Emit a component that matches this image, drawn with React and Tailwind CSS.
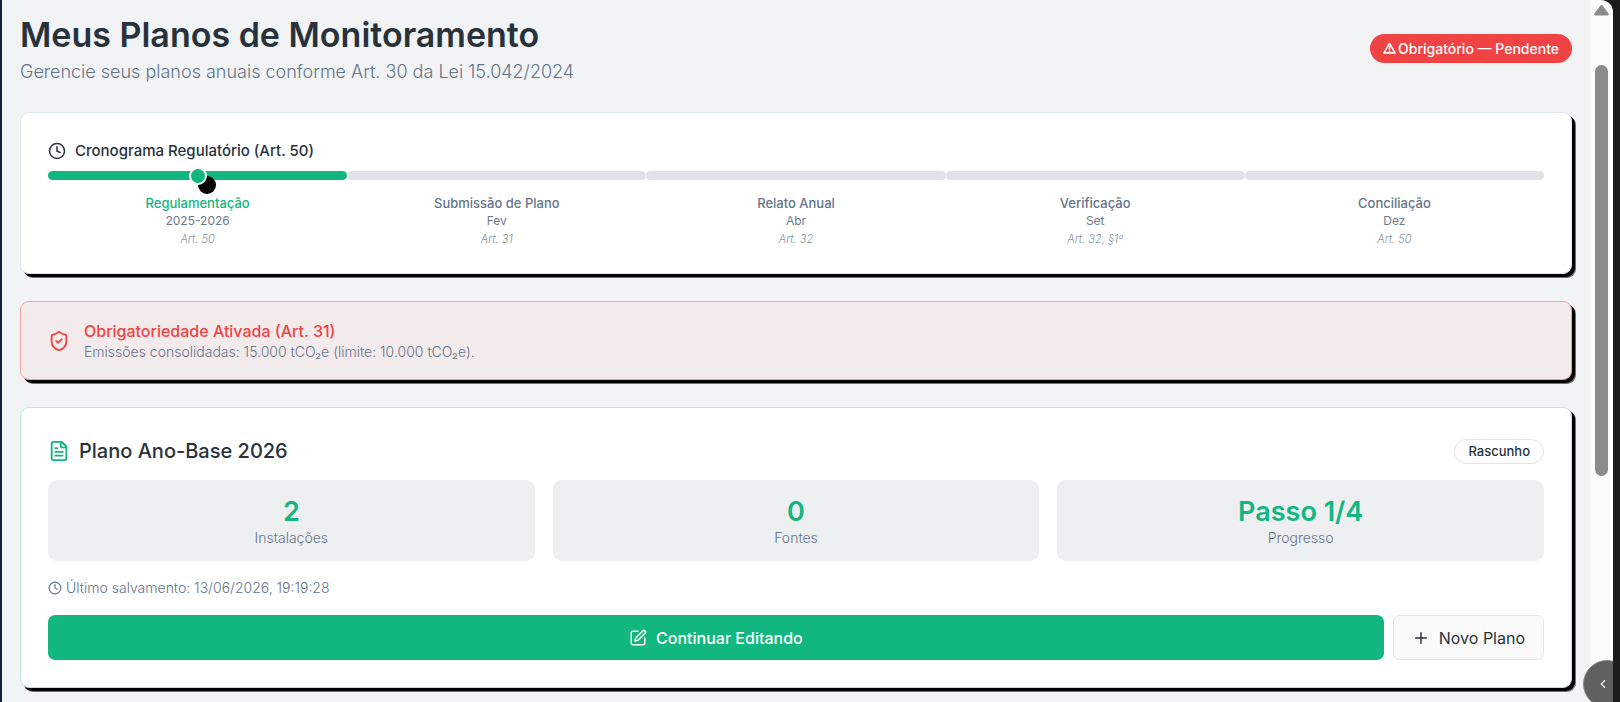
import clsx from "clsx";
import { ChevronLeft, Clock, FileText, Plus, ShieldCheck, SquarePen } from "lucide-react";

const STEPS = [
  { label: "Regulamentação", period: "2025-2026", article: "Art. 50", active: true },
  { label: "Submissão de Plano", period: "Fev", article: "Art. 31" },
  { label: "Relato Anual", period: "Abr", article: "Art. 32" },
  { label: "Verificação", period: "Set", article: "Art. 32, §1º" },
  { label: "Conciliação", period: "Dez", article: "Art. 50" },
];

const STATS = [
  { value: "2", label: "Instalações" },
  { value: "0", label: "Fontes" },
  { value: "Passo 1/4", label: "Progresso" },
];

function Card({ className, children }) {
  return (
    <section className={clsx("rounded-[9px] border shadow-[3px_3px_0_0_#000,4px_4px_0_0_#0008]", className)}>
      {children}
    </section>
  );
}

function WarningIcon() {
  return (
    <svg className="h-3 w-[13px]" viewBox="0 0 13 12" fill="none" stroke="currentColor" aria-hidden="true">
      <path d="M6.500 1.300L12 10.900H1Z" strokeWidth="1.600" strokeLinejoin="round" />
      <path d="M6.500 4V7.800M6.500 8.700V10.200" strokeWidth="1.500" />
    </svg>
  );
}

function Header() {
  return (
    <header className="flex items-center justify-between">
      <div>
        <h1 className="text-[34px] leading-[48px] font-semibold">Meus Planos de Monitoramento</h1>
        <p className="text-[18px] leading-[26px] font-light text-[#64748b]">
          Gerencie seus planos anuais conforme Art. 30 da Lei 15.042/2024
        </p>
      </div>
      <span className="flex items-center gap-0.5 rounded-full bg-[#f04444] px-[13px] text-[14px] leading-[29px] font-medium text-white">
        <WarningIcon />
        Obrigatório — Pendente
      </span>
    </header>
  );
}

function Timeline() {
  return (
    <Card className="border-[#dfe6ef] bg-white px-[27px] pt-[26px] pb-[25px]">
      <h2 className="flex items-center gap-[9px] text-[15px] leading-6 font-medium">
        <Clock className="size-[18px]" />
        Cronograma Regulatório (Art. 50)
      </h2>
      <ol className="mt-2 grid grid-cols-5">
        {STEPS.map((step) => (
          <li key={step.label} className="flex flex-col items-center">
            <div
              className={clsx(
                "relative h-[9px] w-full rounded-full",
                step.active ? "bg-[#12b780]" : "bg-[#dfe2e7]"
              )}
            >
              {step.active && (
                <span className="absolute top-1/2 left-1/2 size-[18px] -translate-1/2 rounded-full border-2 border-white bg-[#12b780] shadow-[9px_9px_0_0_#000]" />
              )}
            </div>
            <span
              className={clsx(
                "mt-3.5 text-[13px] leading-[18px] font-medium",
                step.active ? "text-[#12b780]" : "text-[#64748b]"
              )}
            >
              {step.label}
            </span>
            <span className="text-[12px] leading-[18px] text-[#6b7a8f]">{step.period}</span>
            <span className="text-[11px] leading-[18px] font-light text-[#8a94a1] italic">{step.article}</span>
          </li>
        ))}
      </ol>
    </Card>
  );
}

function ObligationAlert() {
  return (
    <Card className="flex items-center gap-3.5 border-[#f4a3a5] bg-[#f3eaeb] px-[27px] pt-[18px] pb-[17px]">
      <ShieldCheck className="size-[22px] text-[#f04444]" />
      <div>
        <h2 className="text-[16px] leading-[22px] font-medium text-[#f04444]">Obrigatoriedade Ativada (Art. 31)</h2>
        <p className="text-[14px] leading-5 font-light text-[#64748b]">
          Emissões consolidadas: 15.000 tCO₂e (limite: 10.000 tCO₂e).
        </p>
      </div>
    </Card>
  );
}

function PlanCard() {
  return (
    <Card className="border-[#b5e8d8] bg-white p-[27px]">
      <div className="flex items-center justify-between">
        <h2 className="flex items-center gap-[9px] text-[20px] leading-8 font-medium">
          <FileText className="size-[22px] text-[#12b780]" />
          Plano Ano-Base 2026
        </h2>
        <span className="rounded-full border border-[#dfe6ef] px-[13px] text-[13px] leading-[23px] font-medium">Rascunho</span>
      </div>
      <dl className="mt-[13px] grid grid-cols-3 gap-[18px]">
        {STATS.map((stat) => (
          <div key={stat.label} className="flex flex-col-reverse rounded-[9px] bg-[#eeeff1] pt-4 pb-[13px] text-center">
            <dt className="text-[14px] leading-5 font-light text-[#64748b]">{stat.label}</dt>
            <dd className="text-[27px] leading-8 font-semibold text-[#12b780]">{stat.value}</dd>
          </div>
        ))}
      </dl>
      <p className="mt-[17px] flex items-center gap-1 text-[14px] leading-5 font-light text-[#64748b]">
        <Clock className="size-3.5" />
        Último salvamento: 13/06/2026, 19:19:28
      </p>
      <div className="mt-[17px] flex gap-[9px]">
        <button
          type="button"
          className="flex h-[45px] flex-1 items-center justify-center gap-[9px] rounded-[7px] bg-[#12b780] text-[16px] font-medium text-white"
        >
          <SquarePen className="size-[18px]" />
          Continuar Editando
        </button>
        <button
          type="button"
          className="flex h-[45px] items-center justify-center gap-[9px] rounded-[7px] border border-[#dfe6ef] bg-[#fafafa] px-[18px] text-[16px]"
        >
          <Plus className="size-[18px]" />
          Novo Plano
        </button>
      </div>
    </Card>
  );
}

function ScrollRail() {
  return (
    <div className="flex w-[23px] flex-col items-center rounded-tr-[12px] bg-[#fcfcfc]" aria-hidden="true">
      <svg className="mt-[5px] h-[11px] w-[15px] shrink-0" viewBox="0 0 15 11" fill="#8b8b8b">
        <path d="M6 1Q7.500 -1 9 1L14.500 8.500Q15.500 10.500 13.500 10.500H1.500Q-.5 10.500 .5 8.500Z" />
      </svg>
      <div className="mt-[49px] h-[411px] w-[13px] rounded-full bg-[#8b8b8b]" />
    </div>
  );
}

export default function App() {
  return (
    <div className="relative flex min-h-screen border-l-2 border-[#0f2430] bg-[#1c1c1c] font-['Inter',sans-serif] text-[#28323c]">
      <main className="flex min-w-0 flex-1 flex-col gap-[27px] bg-[#f1f3f5] pt-[11px] pr-[18px] pb-3 pl-[18px]">
        <Header />
        <Timeline />
        <ObligationAlert />
        <PlanCard />
      </main>
      <ScrollRail />
      <div className="w-[7px]" />
      <div className="absolute right-[7px] bottom-0 h-[42px] w-[30px] overflow-hidden">
        <button
          type="button"
          aria-label="Abrir painel"
          className="flex size-12 items-center rounded-full border border-[#8a8a8a] bg-[#606060] pl-3 text-white"
        >
          <ChevronLeft className="size-3.5" />
        </button>
      </div>
    </div>
  );
}
